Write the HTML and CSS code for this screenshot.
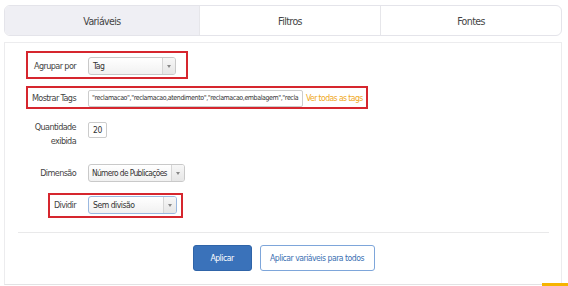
FILE: index.html
```html
<!DOCTYPE html>
<html lang="pt">
<head>
<meta charset="utf-8">
<title>Variáveis</title>
<link rel="stylesheet" href="styles.css">
</head>
<body>
<div class="tabs">
  <div class="tab tab-active tab-1">Variáveis</div>
  <div class="tab tab-2">Filtros</div>
  <div class="tab tab-3">Fontes</div>
</div>
<div class="panel">
  <div class="form">
    <div class="row row-1">
      <div class="label">Agrupar por</div>
      <div class="select select-tag"><span class="select-text">Tag</span><span class="select-arrow"><span class="tri"></span></span></div>
    </div>
    <div class="row row-2">
      <div class="label">Mostrar Tags</div>
      <div class="text-input tags-input"><span class="tags-text">"reclamacao","reclamacao,atendimento","reclamacao,embalagem","recla</span></div>
      <span class="link">Ver todas as tags</span>
    </div>
    <div class="row row-top">
      <div class="label label-2">Quantidade<br>exibida</div>
      <div class="text-input qty-input">20</div>
    </div>
    <div class="row row-4">
      <div class="label">Dimensão</div>
      <div class="select select-dim"><span class="select-text">Número de Publicações</span><span class="select-arrow"><span class="tri"></span></span></div>
    </div>
    <div class="row">
      <div class="label">Dividir</div>
      <div class="select select-div focus"><span class="select-text">Sem divisão</span><span class="select-arrow"><span class="tri"></span></span></div>
    </div>
  </div>
  <div class="separator"></div>
  <div class="actions">
    <button class="btn btn-primary">Aplicar</button>
    <button class="btn btn-outline">Aplicar variáveis para todos</button>
  </div>
</div>
<div class="mark mark-1"></div>
<div class="mark mark-2"></div>
<div class="mark mark-3"></div>
<div class="corner-tab"></div>
</body>
</html>
```
FILE: styles.css
```css
html, body {
  margin: 0;
  padding: 0;
  background: #ffffff;
}
body {
  width: 568px;
  height: 286px;
  overflow: hidden;
  position: relative;
  font-family: "DejaVu Sans Condensed", "DejaVu Sans", sans-serif;
  color: #444;
}
.tabs {
  margin: 5px 0 0 4px;
  width: 558px;
  height: 31px;
  box-sizing: border-box;
  border: 1px solid #e4e4ea;
  border-radius: 6px;
  display: flex;
  overflow: hidden;
}
.tab {
  display: flex;
  align-items: center;
  justify-content: center;
  font-size: 10.5px;
  letter-spacing: -0.6px;
  color: #444;
}
.tab-1 { width: 194px; }
.tab-2 { width: 180px; border-left: 1px solid #e6e6ea; }
.tab-3 { flex: 1; border-left: 1px solid #e6e6ea; }
.tab-active { background: #efeff4; }

.panel {
  margin: 6px 0 0 4px;
  width: 558px;
  height: 243px;
  box-sizing: border-box;
  border: 1px solid #ececee;
  border-bottom-color: #e2e2e4;
}
.form {
  padding-top: 9px;
  padding-left: 21px;
  display: flex;
  flex-direction: column;
}
.row {
  display: flex;
  align-items: center;
  height: 28px;
}
.row-1 { margin-bottom: 4px; }
.row-2 { margin-bottom: 8px; }
.row-4 { margin-bottom: 4px; }
.row-top {
  align-items: flex-start;
  height: 36px;
  padding-top: 2px;
  box-sizing: border-box;
  margin-bottom: 3px;
}
.label {
  width: 50px;
  text-align: right;
  margin-right: 12px;
  font-size: 9px;
  letter-spacing: -0.6px;
  color: #444;
  white-space: nowrap;
  display: flex;
  justify-content: flex-end;
}
.label-2 {
  display: block;
  line-height: 14px;
  margin-top: -2px;
}
.select {
  height: 18px;
  box-sizing: border-box;
  border: 1px solid #c9c9c9;
  border-radius: 3px;
  background: linear-gradient(#ffffff, #f1f1f1);
  display: flex;
  align-items: stretch;
  font-size: 8.6px;
  letter-spacing: -0.5px;
  color: #333;
}
.select-tag { width: 88px; }
.select-dim { width: 97px; font-size: 8.3px; letter-spacing: -0.6px; }
.select-div { width: 89px; }
.focus { border-color: #9ab8e0; }
.select-text {
  flex: 1;
  display: flex;
  align-items: center;
  padding-left: 4px;
  white-space: nowrap;
}
.select-dim .select-text { padding-left: 3px; }
.select-arrow {
  width: 12px;
  flex: 0 0 12px;
  border-left: 1px solid #d6d6d6;
  background: linear-gradient(#f7f7f7, #e6e6e6);
  display: flex;
  align-items: center;
  justify-content: center;
  border-radius: 0 2px 2px 0;
}
.tri {
  width: 0;
  height: 0;
  border-left: 2px solid transparent;
  border-right: 2px solid transparent;
  border-top: 3px solid #888;
}
.text-input {
  box-sizing: border-box;
  border: 1px solid #cccccc;
  border-radius: 2px;
  background: #fff;
  color: #333;
  white-space: nowrap;
  display: flex;
  align-items: center;
}
.tags-input {
  width: 215px;
  height: 17px;
  font-size: 7px;
  letter-spacing: -0.4px;
  padding-left: 3px;
}
.tags-text {
  white-space: nowrap;
}
.qty-input {
  width: 19px;
  height: 16px;
  font-size: 8.5px;
  letter-spacing: -0.3px;
  padding-left: 4px;
}
.link {
  margin-left: 3px;
  font-size: 8.6px;
  letter-spacing: -0.6px;
  color: #f0a81c;
  white-space: nowrap;
}
.separator {
  margin: 13px 12px 0 13px;
  height: 1px;
  background: #e9e9ea;
}
.actions {
  margin-top: 12px;
  display: flex;
  justify-content: center;
  gap: 8px;
  padding-left: 1px;
}
.btn {
  height: 26px;
  box-sizing: border-box;
  border-radius: 3px;
  font-family: inherit;
  font-size: 8.6px;
  letter-spacing: -0.5px;
  padding: 0;
  white-space: nowrap;
  cursor: pointer;
}
.btn-primary {
  width: 59px;
  background: #3a72ba;
  border: 1px solid #2f64a8;
  color: #fff;
}
.btn-outline {
  width: 115px;
  background: #fff;
  border: 1px solid #7ea6da;
  color: #3a6fb2;
}
.mark {
  position: absolute;
  box-sizing: border-box;
  border: 2px solid #d6262e;
  pointer-events: none;
}
.mark-1 { left: 26px; top: 51px; width: 162px; height: 28px; }
.mark-2 { left: 26px; top: 86px; width: 342px; height: 23px; }
.mark-3 { left: 48px; top: 193px; width: 135px; height: 25px; }
.corner-tab {
  position: absolute;
  left: 542px;
  top: 283px;
  width: 26px;
  height: 3px;
  background: #f6b400;
}
```
